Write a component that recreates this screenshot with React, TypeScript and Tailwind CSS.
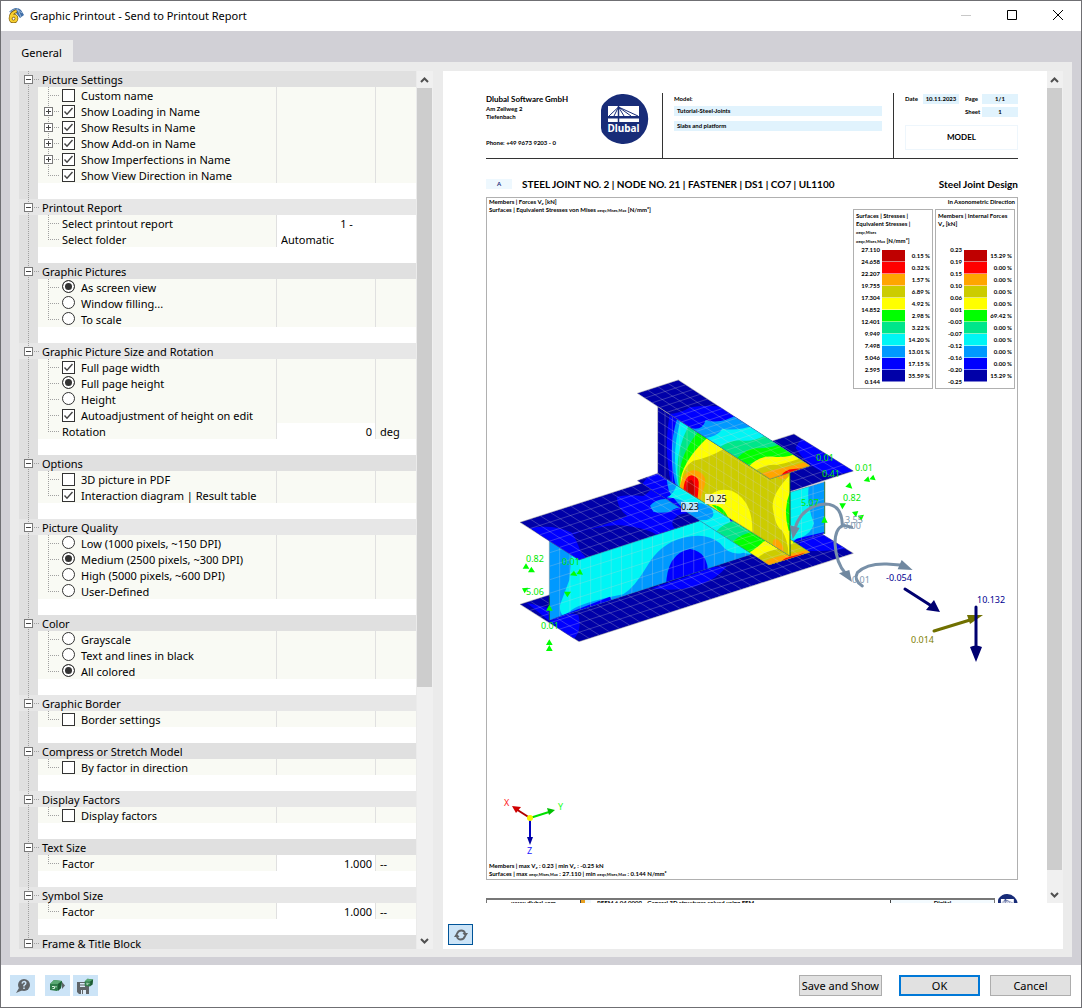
import { useState } from "react";
import type { ReactNode } from "react";

type RowKind = "check" | "radio" | "field";

type Row = {
  kind: RowKind;
  label: string;
  on?: boolean;
  expandable?: boolean;
  value?: string;
  unit?: string;
  wide?: boolean;
};

type Section = {
  title: string;
  rows: Row[];
};

type LegendItem = [string, string];

const sections: Section[] = [
  {
    title: "Picture Settings",
    rows: [
      { kind: "check", label: "Custom name" },
      { kind: "check", label: "Show Loading in Name", on: true, expandable: true },
      { kind: "check", label: "Show Results in Name", on: true, expandable: true },
      { kind: "check", label: "Show Add-on in Name", on: true, expandable: true },
      { kind: "check", label: "Show Imperfections in Name", on: true, expandable: true },
      { kind: "check", label: "Show View Direction in Name", on: true },
    ],
  },
  {
    title: "Printout Report",
    rows: [
      { kind: "field", label: "Select printout report", value: "1 -", wide: true },
      { kind: "field", label: "Select folder", value: "Automatic", wide: true },
    ],
  },
  {
    title: "Graphic Pictures",
    rows: [
      { kind: "radio", label: "As screen view", on: true },
      { kind: "radio", label: "Window filling..." },
      { kind: "radio", label: "To scale" },
    ],
  },
  {
    title: "Graphic Picture Size and Rotation",
    rows: [
      { kind: "check", label: "Full page width", on: true },
      { kind: "radio", label: "Full page height", on: true },
      { kind: "radio", label: "Height" },
      { kind: "check", label: "Autoadjustment of height on edit", on: true },
      { kind: "field", label: "Rotation", value: "0", unit: "deg" },
    ],
  },
  {
    title: "Options",
    rows: [
      { kind: "check", label: "3D picture in PDF" },
      { kind: "check", label: "Interaction diagram | Result table", on: true },
    ],
  },
  {
    title: "Picture Quality",
    rows: [
      { kind: "radio", label: "Low (1000 pixels, ~150 DPI)" },
      { kind: "radio", label: "Medium (2500 pixels, ~300 DPI)", on: true },
      { kind: "radio", label: "High (5000 pixels, ~600 DPI)" },
      { kind: "radio", label: "User-Defined" },
    ],
  },
  {
    title: "Color",
    rows: [
      { kind: "radio", label: "Grayscale" },
      { kind: "radio", label: "Text and lines in black" },
      { kind: "radio", label: "All colored", on: true },
    ],
  },
  { title: "Graphic Border", rows: [{ kind: "check", label: "Border settings" }] },
  { title: "Compress or Stretch Model", rows: [{ kind: "check", label: "By factor in direction" }] },
  { title: "Display Factors", rows: [{ kind: "check", label: "Display factors" }] },
  { title: "Text Size", rows: [{ kind: "field", label: "Factor", value: "1.000", unit: "--" }] },
  { title: "Symbol Size", rows: [{ kind: "field", label: "Factor", value: "1.000", unit: "--" }] },
  { title: "Frame & Title Block", rows: [] },
];

// contour colours, lowest to highest
const C = [
  "#0000a8",
  "#0000ff",
  "#0099ff",
  "#00f5f5",
  "#00e68a",
  "#00ff00",
  "#ffff00",
  "#cccc00",
  "#ffa500",
  "#ff0000",
  "#bf0000",
];

const stressLegend: LegendItem[] = [
  ["27.110", "0.15 %"],
  ["24.658", "0.32 %"],
  ["22.207", "1.57 %"],
  ["19.755", "6.89 %"],
  ["17.304", "4.92 %"],
  ["14.852", "2.98 %"],
  ["12.401", "3.22 %"],
  ["9.949", "14.20 %"],
  ["7.498", "13.01 %"],
  ["5.046", "17.15 %"],
  ["2.595", "35.59 %"],
];

const forceLegend: LegendItem[] = [
  ["0.23", "15.29 %"],
  ["0.19", "0.00 %"],
  ["0.15", "0.00 %"],
  ["0.10", "0.00 %"],
  ["0.06", "0.00 %"],
  ["0.01", "69.42 %"],
  ["-0.03", "0.00 %"],
  ["-0.07", "0.00 %"],
  ["-0.12", "0.00 %"],
  ["-0.16", "0.00 %"],
  ["-0.20", "15.29 %"],
];

function BoxGlyph({ x, y, plus }: { x: number; y: number; plus?: boolean }) {
  return (
    <g stroke="#7a7a7a" fill="#fff">
      <rect x={x + 0.5} y={y + 0.5} width="8" height="8" />
      <path d={`M${x + 2} ${y + 4.5}h5`} stroke="#444" />
      {plus && <path d={`M${x + 4.5} ${y + 2}v5`} stroke="#444" />}
    </g>
  );
}

function Gutter() {
  return (
    <svg className="h-4 w-[19px] shrink-0 bg-[#e0e0e0]" viewBox="0 0 19 16">
      <path d="M9.5 0V16" stroke="#a0a0a0" strokeDasharray="1 1" />
    </svg>
  );
}

function Branch({ last, expandable }: { last: boolean; expandable?: boolean }) {
  return (
    <svg className="h-4 w-6 shrink-0" viewBox="0 0 24 16">
      <path d={last ? "M10.5 0V8" : "M10.5 0V16"} stroke="#a0a0a0" strokeDasharray="1 1" />
      <path d="M10 8.5H21" stroke="#a0a0a0" strokeDasharray="1 1" />
      {expandable && <BoxGlyph x={6} y={4} plus />}
    </svg>
  );
}

function Tick({ defaultOn }: { defaultOn?: boolean }) {
  return (
    <span className="mt-[2px] grid size-[13px] shrink-0">
      <input
        type="checkbox"
        defaultChecked={defaultOn}
        className="peer col-start-1 row-start-1 size-[13px] appearance-none border border-[#333] bg-white"
      />
      <svg
        className="pointer-events-none col-start-1 row-start-1 hidden size-[13px] peer-checked:block"
        viewBox="0 0 13 13"
        fill="none"
      >
        <path d="M2.5 6.5L5 9.2L10.5 3" stroke="#444" strokeWidth="1.4" />
      </svg>
    </span>
  );
}

function OptionRow({ row, last, group, id }: { row: Row; last: boolean; group: string; id: string }) {
  const isField = row.kind === "field";

  return (
    <div className="flex h-4 leading-[18px]">
      <Gutter />
      <div className="flex h-4 w-[238px] shrink-0 bg-[#f9faf4]">
        <Branch last={last} expandable={row.expandable} />
        {isField ? (
          <label htmlFor={id}>{row.label}</label>
        ) : (
          <label className="flex items-start gap-[6px]">
            {row.kind === "check" ? (
              <Tick defaultOn={row.on} />
            ) : (
              <input
                type="radio"
                name={group}
                defaultChecked={row.on}
                className="mt-px size-[13px] shrink-0 appearance-none rounded-full border border-[#333] bg-white checked:bg-[#333] checked:shadow-[inset_0_0_0_2px_#fff]"
              />
            )}
            {row.label}
          </label>
        )}
      </div>
      {row.wide ? (
        <div className="flex flex-1 border-l border-[#e0e0e0] bg-white">
          <input
            id={id}
            defaultValue={row.value}
            className={`h-4 w-full min-w-0 px-1 pt-px outline-none ${row.value === "1 -" ? "text-center" : ""}`}
          />
        </div>
      ) : (
        <>
          <div className={`flex w-[99px] border-l border-[#e0e0e0] ${isField ? "bg-white" : "bg-[#f9faf4]"}`}>
            {isField && (
              <input
                id={id}
                defaultValue={row.value}
                className="h-4 w-full min-w-0 pr-[3px] pt-px text-right outline-none"
              />
            )}
          </div>
          <div className="flex-1 border-l border-[#e0e0e0] bg-[#f9faf4] pl-1">{row.unit}</div>
        </>
      )}
    </div>
  );
}

function SectionBlock({ section, index }: { section: Section; index: number }) {
  const [open, setOpen] = useState(true);

  return (
    <div className="shrink-0">
      <button
        type="button"
        onClick={() => setOpen(!open)}
        className={`flex h-4 w-full text-left leading-[18px] ${index % 2 ? "bg-[#e7e7e7]" : "bg-[#e0e0e0]"}`}
      >
        <svg className="h-4 w-[23px] shrink-0" viewBox="0 0 23 16">
          <path d="M9.5 0V16M15 8.5H20" stroke="#a0a0a0" strokeDasharray="1 1" />
          <BoxGlyph x={5} y={4} plus={!open} />
        </svg>
        {section.title}
      </button>
      {open &&
        section.rows.map((row, i) => (
          <OptionRow
            key={row.label}
            row={row}
            last={i === section.rows.length - 1}
            group={section.title}
            id={`field-${index}-${i}`}
          />
        ))}
      <div className="flex h-4 bg-white">
        <Gutter />
      </div>
    </div>
  );
}

function ScrollBar({ thumb }: { thumb: string }) {
  return (
    <div className="flex w-4 shrink-0 flex-col bg-[#f0f0f0]">
      <button type="button" aria-label="Scroll up" className="grid h-[17px] w-[15px] place-items-center">
        <svg width="9" height="6" viewBox="0 0 9 6" fill="none">
          <path d="M1 5L4.5 1.5L8 5" stroke="#505050" strokeWidth="2" />
        </svg>
      </button>
      <div className="min-h-0 flex-1">
        <div className={`w-[15px] bg-[#cdcdcd] ${thumb}`} />
      </div>
      <button type="button" aria-label="Scroll down" className="grid h-[17px] w-[15px] place-items-center">
        <svg width="9" height="6" viewBox="0 0 9 6" fill="none">
          <path d="M1 1L4.5 4.5L8 1" stroke="#505050" strokeWidth="2" />
        </svg>
      </button>
    </div>
  );
}

function DlubalLogo({ className }: { className: string }) {
  return (
    <svg className={className} viewBox="0 0 48 50">
      <path d="M3 9A25 25 0 1 1 3 41Q0 38 0 34V16Q0 12 3 9Z" fill="#182c78" />
      <path d="M7 12H38V22H7ZM7 24.500H38V28H7Z" fill="#fff" />
      <path d="M8 22L17.500 13L37 22M17.500 13L13 22M17.500 13L23 22M17.500 13L30 22" stroke="#182c78" fill="none" />
      <path d="M17.500 12V28" stroke="#182c78" strokeWidth="1.500" />
      <text x="22.500" y="38" textAnchor="middle" fill="#fff" className="font-['Noto_Sans'] text-[10px] font-bold">
        Dlubal
      </text>
    </svg>
  );
}

type Pt = [number, number];

// mesh lines on the parallelogram a-b-c-d, n divisions along ab and m along ad
function meshPath(a: Pt, b: Pt, c: Pt, d: Pt, n: number, m: number) {
  const at = (p: Pt, q: Pt, t: number) => `${p[0] + (q[0] - p[0]) * t},${p[1] + (q[1] - p[1]) * t}`;
  let out = "";
  for (let i = 0; i <= n; i++) out += `M${at(a, b, i / n)}L${at(d, c, i / n)}`;
  for (let j = 0; j <= m; j++) out += `M${at(a, d, j / m)}L${at(b, c, j / m)}`;
  return out;
}

type PlateProps = {
  id: string;
  outline: string;
  base: number;
  bands: [number, string][];
  mesh: string;
};

function Plate({ id, outline, base, bands, mesh }: PlateProps) {
  return (
    <g>
      <clipPath id={id}>
        <polygon points={outline} />
      </clipPath>
      <g clipPath={`url(#${id})`}>
        <polygon points={outline} fill={C[base]} />
        {bands.map(([level, d], i) => (
          <path key={i} d={d} fill={C[level]} />
        ))}
        <path d={mesh} stroke="#d0d0d0" strokeOpacity="0.4" strokeWidth="2" fill="none" />
      </g>
      <polygon points={outline} fill="none" stroke="#404060" strokeOpacity="0.5" strokeWidth="2" />
    </g>
  );
}

const plates: PlateProps[] = [
  {
    id: "beam-bottom",
    outline: "30,703 852,440 1030,550 207,815",
    base: 0,
    bands: [
      [1, "M50,698L118,715L205,735Q218,780 190,808L170,795Z"],
      [1, "M425,655Q520,625 610,590L650,590Q620,625 580,640Q520,668 425,655Z"],
      [1, "M870,515L945,485L1012,535Q930,548 870,540Z"],
    ],
    mesh: meshPath([30, 703], [852, 440], [1030, 550], [207, 815], 27, 6),
  },
  {
    id: "beam-web",
    outline: "118,513 200,560 577,440 737,535 725,553 118,751",
    base: 3,
    bands: [
      [2, "M100,500L185,556L178,630L150,705Q148,730 160,736L175,728Q200,700 340,673Q375,650 410,590Q450,520 520,503Q590,485 630,520Q660,560 700,548L760,560L118,780Z"],
      [1, "M468,650Q470,550 540,537Q596,545 594,615Z"],
      [1, "M118,751L300,680L310,700Z"],
    ],
    mesh: meshPath([118, 508], [737, 310], [737, 553], [118, 751], 20, 6),
  },
  {
    id: "beam-web-back",
    outline: "840,367 944,335 944,490 840,522",
    base: 2,
    bands: [
      [3, "M830,360L897,345Q888,400 912,460Q905,490 870,505L830,515Z"],
      [1, "M840,525L860,506Q900,496 944,486V500L840,530Z"],
    ],
    mesh: meshPath([840, 367], [944, 335], [944, 490], [840, 522], 3, 6),
  },
  {
    id: "beam-top",
    outline: "30,457 852,192 1030,303 207,570",
    base: 0,
    bands: [
      [1, "M62,474Q130,462 185,488Q200,510 212,545L230,565L207,590Z"],
      [1, "M185,490Q280,470 352,438Q325,420 320,380Q350,372 400,378Q430,360 430,340L610,400L610,450L560,463L440,494Q400,470 320,465Q230,475 195,492Z"],
      [2, "M420,407Q440,385 470,387L530,395Q560,410 545,425Q510,400 480,425Q450,432 430,425Z"],
      [0, "M487,455Q500,430 535,430L575,455L500,478Q485,470 487,455Z"],
      [4, "M490,478L585,448L585,458L490,486Z"],
      [1, "M858,232Q870,206 885,205L1040,303L960,315Q890,290 858,235Z"],
    ],
    mesh: meshPath([30, 457], [852, 192], [1030, 303], [207, 570], 27, 6),
  },
  {
    id: "cross-bottom",
    outline: "382,332 443,310 840,558 840,508 900,547 777,585",
    base: 1,
    bands: [
      [0, "M380,325L415,318L395,345Z"],
      [2, "M470,325L620,380L700,560L560,455Q500,400 485,375Q475,372 470,325Z"],
      [3, "M500,345L640,400L720,600L540,452L590,450Q625,440 600,410Q560,390 530,400Q510,385 470,382Q490,375 500,345Z"],
      [4, "M618,485Q640,460 680,450L900,500V650Z"],
      [5, "M665,518Q690,490 745,482L900,500V650Z"],
      [6, "M715,550Q745,530 760,515L850,480V650Z"],
      [7, "M742,565Q760,545 805,537L900,500V650H760Z"],
      [8, "M760,577Q790,560 830,555L900,538V650H760Z"],
      [9, "M812,577Q825,560 850,558L885,548L830,580Z"],
    ],
    mesh: meshPath([382, 332], [777, 585], [900, 547], [505, 294], 18, 4),
  },
  {
    id: "cross-web",
    outline: "443,110 780,327 840,308 840,558 443,310",
    base: 0,
    bands: [
      [1, "M482,120Q458,230 484,345L840,600V100Z"],
      [2, "M503,140Q470,240 498,350L840,600V100Z"],
      [3, "M512,150Q482,250 505,355L840,600V100Z"],
      [4, "M534,170Q488,260 508,360L840,600V100Z"],
      [5, "M565,185Q495,270 510,360L840,600V100Z"],
      [6, "M592,203Q500,290 512,360L840,600V200Z"],
      [7, "M642,236Q600,262 550,272Q510,295 515,360L840,600V300Z"],
      [8, "M508,355Q520,300 555,300Q595,312 583,350L568,395Z"],
      [9, "M520,365Q522,318 545,316Q570,320 566,350L562,395Z"],
      [10, "M528,370Q526,330 545,330Q558,340 554,385Z"],
      [6, "M590,385Q620,350 665,362Q730,390 727,490L600,412Z"],
      [5, "M605,405Q640,405 655,445Z"],
      [6, "M840,315Q786,370 788,410Q795,470 815,480Q835,510 836,560L840,560Z"],
      [5, "M840,365Q818,420 836,482L840,482Z"],
      [8, "M788,525Q788,500 805,510Q825,530 820,548Z"],
      [8, "M798,318L838,303L832,322Q815,335 798,320Z"],
    ],
    mesh: meshPath([443, 60], [840, 308], [840, 558], [443, 310], 18, 8),
  },
  {
    id: "cross-top",
    outline: "382,70 505,30 900,287 780,327",
    base: 0,
    bands: [
      [1, "M470,133Q515,130 540,112Q590,104 650,112L1000,300L760,400Z"],
      [2, "M545,175Q578,182 587,150Q630,165 685,132L1000,300L760,400Z"],
      [3, "M580,205Q625,200 637,176Q680,185 735,165L1000,300L760,400Z"],
      [4, "M625,233Q670,205 700,212Q740,215 775,190L1000,300L760,400Z"],
      [5, "M680,265Q715,232 740,235Q790,235 815,220L1000,300L760,400Z"],
      [6, "M715,290Q750,255 790,260Q835,265 860,248L1000,300L760,400Z"],
      [7, "M735,302Q770,282 800,285Q850,275 880,262L1000,300L760,400Z"],
      [8, "M750,312Q790,298 820,293Q860,285 890,275L1000,300L760,400Z"],
      [9, "M812,318Q825,298 850,297L885,294L830,325Z"],
    ],
    mesh: meshPath([382, 70], [780, 327], [900, 287], [505, 30], 18, 4),
  },
];

function ModelDrawing() {
  return (
    <svg className="absolute inset-0 h-full w-full" viewBox="487 198 530 681">
      <g transform="translate(510 370) scale(0.33333)">
        {plates.map((plate) => (
          <Plate key={plate.id} {...plate} />
        ))}
        <path d="M840,310V558M944,335V492M118,680V751" stroke="#006000" strokeWidth="2" />
        <g fill="#00ff00">
          <path d="M48,580L58,596H38ZM64,590L75,607H54ZM36,655L54,653L44,670ZM180,616L192,602L202,618ZM200,612L210,596L219,614ZM162,665H183L172,682ZM118,704L128,722H108ZM118,808L128,825H108ZM118,825L128,843H108Z" />
          <path d="M1006,350L1020,337L1027,356ZM1061,333L1075,319L1080,336ZM1078,328L1090,314L1097,331ZM988,400H1008L997,418ZM1026,426L1045,423L1038,442ZM1043,437L1062,434L1054,452ZM943,438L953,458H934Z" />
        </g>
        <g stroke="#7890a8" strokeWidth="9" strokeLinecap="round" fill="none">
          <path d="M997,464Q995,402 945,402Q875,408 855,475" />
          <path d="M1025,472L1000,466Q975,475 975,520Q978,580 1008,612" />
          <path d="M1057,648Q1030,630 1042,608Q1070,580 1130,582L1170,585" />
        </g>
        <path d="M840,466L869,474L848,508ZM987,610L1018,600L1026,636ZM1163,598L1175,570L1208,600Z" fill="#7088a0" />
      </g>

      <g strokeWidth="3" strokeLinecap="round" strokeLinejoin="round">
        <path d="M934 631L970 620" stroke="#707000" />
        <path d="M967 615L970 624L983 615Z" fill="#707000" />
        <path d="M905 589L930 605M976 607V648" stroke="#000070" />
        <path d="M926 610L934 600L940 612ZM970 647Q976 644 982 647L976 662Z" fill="#000070" />
      </g>

      <g fontSize="9" className="font-['Noto_Sans'] font-normal">
        <rect x="681" y="502" width="17" height="10" fill="#ffffff" fillOpacity="0.7" />
        <rect x="705" y="494" width="20" height="10" fill="#f5f5c0" />
        <g fill="#000">
          <text x="681" y="510">0.23</text>
          <text x="706" y="502">-0.25</text>
        </g>
        <g fill="#00e800">
          <text x="526" y="562">0.82</text>
          <text x="562" y="565">0.01</text>
          <text x="526" y="595">5.06</text>
          <text x="541" y="629">0.01</text>
          <text x="816" y="461">0.01</text>
          <text x="822" y="477">0.41</text>
          <text x="855" y="471">0.01</text>
          <text x="801" y="506">5.07</text>
          <text x="843" y="501">0.82</text>
        </g>
        <g fill="#8098b0">
          <text x="845" y="523">3.55</text>
          <text x="843" y="529">0.00</text>
          <text x="852" y="583">0.01</text>
        </g>
        <g fill="#000090">
          <text x="886" y="581">-0.054</text>
          <text x="977" y="603">10.132</text>
        </g>
        <text x="911" y="643" fill="#808000">0.014</text>
        <text x="504" y="806" fill="#ff2020">X</text>
        <text x="558" y="810" fill="#20ff20">Y</text>
        <text x="527" y="854" fill="#2020ff">Z</text>
      </g>

      <g strokeWidth="2">
        <path d="M530 818L516 809" stroke="#b00000" />
        <path d="M512 806L521 807L516 813Z" fill="#d00000" />
        <path d="M530 818L549 812" stroke="#00e000" />
        <path d="M555 810L547 808L549 815Z" fill="#00c000" />
        <path d="M530 818V838" stroke="#0000c0" />
        <path d="M530 845L527 837H533Z" fill="#0000a0" />
      </g>
      <circle cx="530" cy="818" r="3" fill="#f5f500" />
    </svg>
  );
}

function Legend({ children, items, end }: { children: ReactNode; items: LegendItem[]; end: string }) {
  return (
    <div className="w-20 border border-[#b0b0b0] bg-white px-[2px] pt-[2px]">
      <div className="h-8 leading-[8px]">{children}</div>
      <div className="flex justify-between">
        <div className="w-6 text-right leading-[12px]">
          {items.map(([value]) => (
            <div key={value}>{value}</div>
          ))}
          <div>{end}</div>
        </div>
        <div className="flex w-[23px] flex-col py-[6px]">
          {[...C].reverse().map((color) => (
            <div key={color} className="h-3 border-b border-white/50" style={{ background: color }} />
          ))}
        </div>
        <div className="w-6 whitespace-nowrap py-[6px] text-right leading-[12px]">
          {items.map(([value, share]) => (
            <div key={value}>{share}</div>
          ))}
        </div>
      </div>
    </div>
  );
}

function Sigma({ children }: { children: ReactNode }) {
  return <span className="text-[4px]">σ{children}</span>;
}

function ReportPage() {
  return (
    <div className="flex min-w-0 flex-1 flex-col overflow-hidden bg-white pl-[43px] pr-[29px] pt-[22px] font-[Lato] text-[6px] font-bold leading-[8px] text-black">
      <header className="flex h-[66px] shrink-0 border-b border-[#333]">
        <div className="flex w-[115px] flex-col pt-px">
          <h2 className="text-[8px] leading-[11px]">Dlubal Software GmbH</h2>
          <p>Am Zellweg 2</p>
          <p>Tiefenbach</p>
          <p className="mt-[18px]">Phone: +49 9673 9203 - 0</p>
        </div>
        <DlubalLogo className="mt-px h-[50px] w-12 shrink-0" />
        <div className="ml-[13px] flex flex-1 flex-col border-l border-[#333] px-[11px] pt-[2px]">
          <p>Model:</p>
          <p className="mt-[3px] h-[10px] bg-[#e1f3fd] pl-[3px] leading-[10px]">Tutorial-Steel-Joints</p>
          <p className="mt-[5px] h-[10px] bg-[#e1f3fd] pl-[3px] leading-[10px]">Slabs and platform</p>
        </div>
        <div className="w-[125px] border-l border-[#333] pl-[11px] pt-px">
          <div className="grid grid-cols-[18px_36px_23px_36px] gap-y-[3px] leading-[10px]">
            <span>Date</span>
            <span className="bg-[#e1f3fd] text-center">10.11.2023</span>
            <span className="pl-[6px]">Page</span>
            <span className="bg-[#e1f3fd] text-center">1/1</span>
            <span className="col-start-3 pl-[6px]">Sheet</span>
            <span className="bg-[#e1f3fd] text-center">1</span>
          </div>
          <div className="mt-2 h-[25px] border border-[#eef6fc] text-center text-[8px] leading-[23px]">MODEL</div>
        </div>
      </header>

      <div className="mt-[17px] flex h-4 shrink-0 items-center text-[10px]">
        <span className="mr-[10px] w-[26px] bg-[#eef8fe] text-center text-[6px] leading-[10px] text-[#182c78]">A</span>
        <h1 className="flex-1 whitespace-nowrap">STEEL JOINT NO. 2 | NODE NO. 21 | FASTENER | DS1 | CO7 | UL1100</h1>
        <span>Steel Joint Design</span>
      </div>

      <div className="relative mt-[5px] flex h-[683px] shrink-0 flex-col justify-between border border-[#b0b0b0]">
        <ModelDrawing />
        <div className="relative flex justify-between pl-[2px] pr-[2px]">
          <div>
            <p>Members | Forces V<sub>z</sub> [kN]</p>
            <p>
              Surfaces | Equivalent Stresses von Mises <Sigma>eqv,Mises,Max</Sigma> [N/mm²]
            </p>
          </div>
          <div>
            <p className="text-right">In Axonometric Direction</p>
            <div className="mt-[3px] flex gap-[2px]">
              <Legend items={stressLegend} end="0.144">
                <p>Surfaces | Stresses |</p>
                <p>Equivalent Stresses |</p>
                <p>
                  <Sigma>eqv,Mises</Sigma>
                </p>
                <p>
                  <Sigma>eqv,Mises,Max</Sigma> [N/mm²]
                </p>
              </Legend>
              <Legend items={forceLegend} end="-0.25">
                <p>Members | Internal Forces</p>
                <p>V<sub>z</sub> [kN]</p>
              </Legend>
            </div>
          </div>
        </div>
        <div className="relative pl-[2px]">
          <p>Members | max V<sub>z</sub> : 0.23 | min V<sub>z</sub> : -0.25 kN</p>
          <p>
            Surfaces | max <Sigma>eqv,Mises,Max</Sigma> : 27.110 | min <Sigma>eqv,Mises,Max</Sigma> : 0.144 N/mm²
          </p>
        </div>
      </div>

      <footer className="mt-[14px] flex shrink-0 items-start">
        <div className="mt-1 flex h-5 flex-1 border-x border-t-2 border-[#777] leading-[6px]">
          <span className="w-[94px] border-r border-[#444] text-center">www.dlubal.com</span>
          <span className="w-1 bg-[#e8a020]" />
          <span className="w-[6px] bg-[#eef8fe]" />
          <span className="flex-1 pl-[6px]">RFEM 6.04.0009 - General 3D structures solved using FEM</span>
          <span className="w-[104px] border-l border-[#444] bg-[#f4fbff] text-center">Digital</span>
        </div>
        <DlubalLogo className="ml-[3px] h-[21px] w-5" />
      </footer>
    </div>
  );
}

function IconButton({ label, outlined, children }: { label: string; outlined?: boolean; children: ReactNode }) {
  return (
    <button
      type="button"
      aria-label={label}
      className={`grid h-[21px] w-[25px] place-items-center bg-[#cce4f7] ${outlined ? "border border-[#005499]" : ""}`}
    >
      {children}
    </button>
  );
}

function DialogButton({ children, primary }: { children: ReactNode; primary?: boolean }) {
  return (
    <button
      type="button"
      className={`h-[21px] min-w-[81px] whitespace-nowrap bg-[#e1e1e1] px-[2px] text-center ${
        primary ? "border-2 border-[#0078d7]" : "border border-[#adadad]"
      }`}
    >
      {children}
    </button>
  );
}

function Cube() {
  return (
    <g>
      <path d="M1 5L5 1L13 2L12 9L8 12L1 11Z" fill="#2f7d4b" />
      <path d="M5 1L13 2L9 5L1 5Z" fill="#5aa873" />
      <path d="M9 5L13 2L12 9L9 12Z" fill="#1d5a33" />
      <path d="M3 7.500H5.500V9.500H3.500M7 7V8.500" stroke="#d5efdc" fill="none" />
    </g>
  );
}

export default function App() {
  return (
    <div className="flex h-screen flex-col border border-[#6f6f73] bg-white font-['Noto_Sans',sans-serif] text-[11px] leading-4 text-black">
      <div className="flex h-[30px] shrink-0 items-start pl-[7px]">
        <svg className="mr-[6px] mt-[6px]" width="16" height="16" viewBox="0 0 16 16">
          <path d="M1 5Q8 -2 13 3L16 8L12 11L8 6Z" fill="#3f6ea8" />
          <path d="M2 5Q8 0 14 6M9 1L13 10" stroke="#9db8d8" strokeWidth="1" fill="none" />
          <path d="M8.500 4Q2.500 6 2.500 11.500A3 3 0 1 0 5.500 8.500Q3.500 9 3 11" stroke="#7a5a10" strokeWidth="3.600" fill="none" />
          <path d="M8.500 4Q2.500 6 2.500 11.500A3 3 0 1 0 5.500 8.500Q3.500 9 3 11" stroke="#f8d030" strokeWidth="2.200" fill="none" />
        </svg>
        <span className="flex-1 leading-[30px]">Graphic Printout - Send to Printout Report</span>
        <button type="button" aria-label="Minimize" className="grid h-7 w-[46px] place-items-center">
          <svg width="10" height="10" viewBox="0 0 10 10">
            <path d="M0 5.500H10" stroke="#c8c8c8" />
          </svg>
        </button>
        <button type="button" aria-label="Maximize" className="grid h-7 w-[46px] place-items-center">
          <svg width="10" height="10" viewBox="0 0 10 10">
            <path d="M0.500 0.500H9.500V9.500H0.500Z" stroke="#000" fill="none" />
          </svg>
        </button>
        <button type="button" aria-label="Close" className="grid h-7 w-[46px] place-items-center">
          <svg width="10" height="10" viewBox="0 0 10 10">
            <path d="M0 0L10 10M10 0L0 10" stroke="#000" />
          </svg>
        </button>
      </div>

      <main className="flex min-h-0 flex-1 flex-col bg-[#d1d0d6] px-[9px] pb-2 pt-[9px]">
        <div role="tablist" className="flex">
          <button type="button" role="tab" aria-selected className="h-[22px] w-[63px] bg-[#ebebeb] pt-1 text-center">
            General
          </button>
        </div>
        <div className="flex min-h-0 flex-1 gap-[10px] bg-[#ebebeb] px-[9px] pb-2 pt-[9px]">
          <div className="flex shrink-0 gap-px">
            <div className="flex w-[397px] flex-col overflow-hidden bg-white">
              {sections.map((section, i) => (
                <SectionBlock key={section.title} section={section} index={i} />
              ))}
            </div>
            <ScrollBar thumb="h-[71%]" />
          </div>

          <div className="flex min-w-0 flex-1 flex-col bg-white">
            <div className="flex min-h-0 flex-1">
              <ReportPage />
              <ScrollBar thumb="h-[98%]" />
            </div>
            <div className="flex h-[46px] shrink-0 items-end pb-1 pl-[5px]">
              <IconButton label="Refresh" outlined>
                <svg width="14" height="12" viewBox="0 0 14 12" fill="none" stroke="#606468" strokeWidth="2">
                  <path d="M3 5Q4 1.500 7.500 1.500Q10 1.500 11 4M11 7Q10 10.500 6.500 10.500Q4 10.500 3 8" />
                  <path d="M8.500 4H14L11.500 8ZM0 8H5.500L2.500 4Z" fill="#606468" stroke="none" />
                </svg>
              </IconButton>
            </div>
          </div>
        </div>
      </main>

      <footer className="flex h-[42px] shrink-0 items-center justify-between pb-px pl-[9px] pr-[10px]">
        <div className="flex gap-[3px]">
          <div className="mr-[7px]">
            <IconButton label="Help">
              <svg width="14" height="14" viewBox="0 0 14 14">
                <circle cx="8" cy="6" r="6" fill="#5f6468" />
                <path d="M3 9L0 14L7 11Z" fill="#5f6468" />
                <path d="M6 4.500Q6.500 2.500 8.200 2.500Q10.500 3 9.500 5L8 6.500V7.500M8 8.500V10" stroke="#cce4f7" strokeWidth="1.500" fill="none" />
              </svg>
            </IconButton>
          </div>
          <IconButton label="Default settings">
            <svg width="17" height="13" viewBox="0 0 17 13">
              <Cube />
              <path d="M13 3L16 6.500L13 10Z" fill="#5f6468" />
            </svg>
          </IconButton>
          <IconButton label="Save settings">
            <svg width="17" height="16" viewBox="0 0 17 16">
              <path d="M0 4H12V16H2L0 14Z" fill="#5f6468" />
              <path d="M3 5H8V9H3ZM4 12H9V16H4Z" fill="#dcebf7" />
              <path d="M3 7H8M5.500 12V16" stroke="#5f6468" />
              <g transform="translate(7 0) scale(0.7)">
                <Cube />
              </g>
            </svg>
          </IconButton>
        </div>
        <div className="flex">
          <DialogButton>Save and Show</DialogButton>
          <span className="w-[17px]" />
          <DialogButton primary>OK</DialogButton>
          <span className="w-[10px]" />
          <DialogButton>Cancel</DialogButton>
        </div>
      </footer>
    </div>
  );
}
